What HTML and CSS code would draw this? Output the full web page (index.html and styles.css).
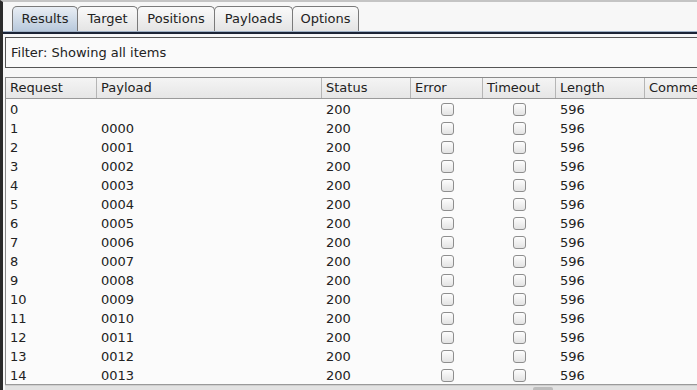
FILE: index.html
```html
<!DOCTYPE html>
<html lang="en">
<head>
  <meta charset="UTF-8" />
  <title>Intruder results</title>
  <link rel="stylesheet" href="styles.css">
</head>
<body>
  <div class="frame">
    <div class="tabs">
      <div class="tab active t-res">Results</div>
      <div class="tab t-tar">Target</div>
      <div class="tab t-pos">Positions</div>
      <div class="tab t-pay">Payloads</div>
      <div class="tab t-opt">Options</div>
    </div>
    <div class="panel">
      <div class="filter">Filter: Showing all items</div>
      <div class="table">
        <div class="row head">
          <div class="c c-req">Request</div>
          <div class="c c-pay">Payload</div>
          <div class="c c-sta">Status</div>
          <div class="c c-err">Error</div>
          <div class="c c-tim">Timeout</div>
          <div class="c c-len">Length</div>
          <div class="c c-com">Comment</div>
        </div>
        <div id="rows"></div>
      </div>
      <div class="hscroll"><div class="thumb"></div></div>
    </div>
  </div>
  <script>
    const rows = document.getElementById('rows');
    for (let i = 0; i < 15; i++) {
      const payload = i === 0 ? '' : String(i - 1).padStart(4, '0');
      const r = document.createElement('div');
      r.className = 'row';
      r.innerHTML =
        `<div class="c c-req">${i}</div>` +
        `<div class="c c-pay">${payload}</div>` +
        `<div class="c c-sta">200</div>` +
        `<div class="c c-err"><span class="box"></span></div>` +
        `<div class="c c-tim"><span class="box"></span></div>` +
        `<div class="c c-len">596</div>` +
        `<div class="c c-com"></div>`;
      rows.appendChild(r);
    }
  </script>
</body>
</html>
```

FILE: styles.css
```css
body {
  margin: 0;
  font-family: "DejaVu Sans", sans-serif;
  font-size: 13px;
  color: #222;
  background: #f7f7f7;
  overflow: hidden;
}
.frame {
  height: 390px;
  border-left: 3px solid #2b2b2b;
  border-top: 2px solid #c4c4c4;
  box-sizing: border-box;
  background: #f7f7f7;
}
.tabs {
  display: flex;
  padding: 4px 0 0 9px;
  height: 25px;
  border-bottom: 1px solid #9fb1c6;
  box-shadow: 0 2px 0 #1c2436;
}
.tab {
  padding-top: 4px;
  text-align: center;
  box-sizing: border-box;
  border: 1px solid #7a7a7a;
  border-bottom: none;
  border-radius: 5px 5px 0 0;
  background: linear-gradient(#fafafa, #e4e4e4);
  margin-right: -1px;
  height: 25px;
}
.tab.active {
  background: linear-gradient(#e9eef4, #b8c9dc);
}
.t-res { width: 66px; }
.t-tar { width: 61px; }
.t-pos { width: 78px; }
.t-pay { width: 79px; }
.t-opt { width: 67px; }
.panel {
  padding: 5px 0 0 2px;
}
.filter {
  border: 1px solid #555;
  border-right: none;
  background: #fafafa;
  height: 29px;
  line-height: 29px;
  padding-left: 5px;
}
.table {
  margin-top: 9px;
  border: 1px solid #8a8a8a;
  border-right: none;
  border-bottom: 1px solid #9a9a9a;
  background: #fbfbfb;
  height: 306px;
  overflow: hidden;
}
.row {
  display: flex;
  height: 19px;
  line-height: 19px;
  white-space: nowrap;
}
.row.head {
  height: 20px;
  line-height: 20px;
  background: linear-gradient(#f4f4f4, #e6e6e6);
  border-bottom: 1px solid #9a9a9a;
  margin-bottom: 1px;
}
.head .c {
  border-right: 1px solid #b5b5b5;
}
.c {
  flex-shrink: 0;
  padding-left: 4px;
  box-sizing: border-box;
  overflow: hidden;
}
.c-req { width: 91px; }
.c-pay { width: 225px; }
.c-sta { width: 89px; }
.c-err { width: 72px; }
.c-tim { width: 73px; }
.c-len { width: 89px; }
.c-com { width: 100px; }
.row:not(.head) .c-err,
.row:not(.head) .c-tim {
  display: flex;
  justify-content: center;
  align-items: center;
  padding-left: 0;
}
.box {
  width: 11px;
  height: 11px;
  border: 1px solid #8e8e8e;
  border-radius: 3px;
  background: linear-gradient(#fdfdfd, #e3e3e3);
}
.hscroll {
  height: 8px;
  background: #e2e2e2;
  border-top: 1px solid #cfcfcf;
  position: relative;
}
.thumb {
  position: absolute;
  left: 528px;
  top: 1px;
  width: 20px;
  height: 6px;
  background: #bcbcbc;
  border-radius: 2px;
}
```
